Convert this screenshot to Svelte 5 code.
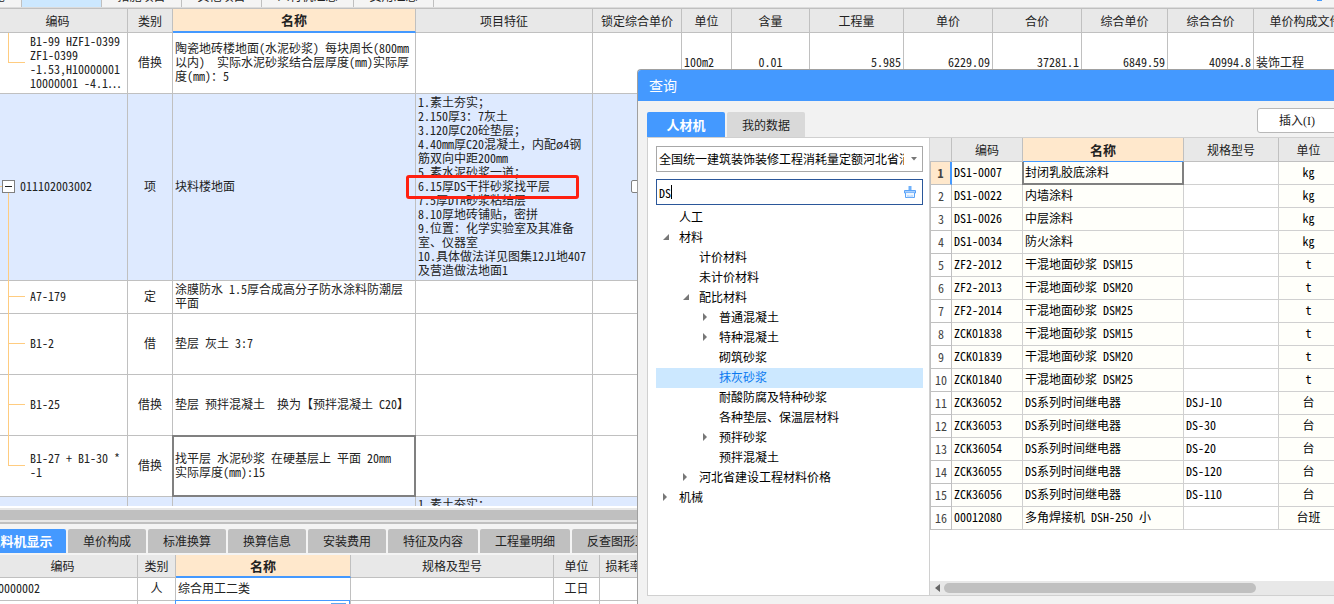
<script>
  const topTabs = [
    { label: '概览', width: 22 },
    { label: '', width: 80, active: true },
    { label: '措施项目', width: 80 },
    { label: '其他项目', width: 80 },
    { label: '人材机汇总', width: 92 },
    { label: '费用汇总', width: 80 },
  ];

  const billColumns = [
    ['编码', 140], ['类别', 45], ['名称', 243], ['项目特征', 177], ['锁定综合单价', 89], ['单位', 50],
    ['含量', 78], ['工程量', 94], ['单价', 89], ['合价', 89], ['综合单价', 86], ['综合合价', 86], ['单价构成文件', 104],
  ];

  const feature = [
    '1.素土夯实；', '2.150厚3：7灰土', '3.120厚C20砼垫层；', '4.40mm厚C20混凝土，内配ø4钢', '筋双向中距200mm',
    '5.素水泥砂浆一道；', '6.15厚DS干拌砂浆找平层', '7.5厚DTA砂浆粘结层', '8.10厚地砖铺贴，密拼', '9.位置：化学实验室及其准备',
    '室、仪器室', '10.具体做法详见图集12J1地407', '及营造做法地面1',
  ];

  const billRows = [
    {
      code: 'B1-99 HZF1-0399\nZF1-0399\n-1.53,H10000001\n10000001 -4.1⋯', kind: '借换', branch: 'last', height: 61,
      name: '陶瓷地砖楼地面(水泥砂浆) 每块周长(800mm\n以内)  实际水泥砂浆结合层厚度(mm)实际厚\n度(mm)：5',
      values: ['100m2', '0.01', '5.985', '6229.09', '37281.1', '6849.59', '40994.8', '装饰工程'],
    },
    { code: '011102003002', kind: '项', name: '块料楼地面', branch: 'root', height: 187, item: true, feature, lock: true },
    { code: 'A7-179', kind: '定', name: '涂膜防水 1.5厚合成高分子防水涂料防潮层\n平面', branch: 'mid', height: 33 },
    { code: 'B1-2', kind: '借', name: '垫层 灰土 3:7', branch: 'mid', height: 61 },
    { code: 'B1-25', kind: '借换', name: '垫层 预拌混凝土  换为【预拌混凝土 C20】', branch: 'mid', height: 61 },
    {
      code: 'B1-27 + B1-30 *\n-1', kind: '借换', branch: 'last', height: 61, current: true,
      name: '找平层 水泥砂浆 在硬基层上 平面 20mm\n实际厚度(mm):15',
    },
    { code: '', kind: '', name: '', branch: 'none', height: 33, item: true, feature: ['1.素土夯实；'], top: true },
  ];

  const valueAlign = ['left', 'center', 'right', 'right', 'right', 'right', 'right', 'left'];

  const detailTabs = ['工料机显示', '单价构成', '标准换算', '换算信息', '安装费用', '特征及内容', '工程量明细', '反查图形工程量'];
  const detailColumns = [['编码', 150], ['类别', 38], ['名称', 175], ['规格及型号', 203], ['单位', 46], ['损耗率', 48]];

  const tree = [
    { label: '人工', level: 0 },
    { label: '材料', level: 0, state: 'open' },
    { label: '计价材料', level: 1 },
    { label: '未计价材料', level: 1 },
    { label: '配比材料', level: 1, state: 'open' },
    { label: '普通混凝土', level: 2, state: 'closed' },
    { label: '特种混凝土', level: 2, state: 'closed' },
    { label: '砌筑砂浆', level: 2 },
    { label: '抹灰砂浆', level: 2 },
    { label: '耐酸防腐及特种砂浆', level: 2 },
    { label: '各种垫层、保温层材料', level: 2 },
    { label: '预拌砂浆', level: 2, state: 'closed' },
    { label: '预拌混凝土', level: 2 },
    { label: '河北省建设工程材料价格', level: 1, state: 'closed' },
    { label: '机械', level: 0, state: 'closed' },
  ];

  const resultColumns = [['', 22], ['编码', 71], ['名称', 161], ['规格型号', 95], ['单位', 60]];
  const results = [
    ['DS1-0007', '封闭乳胶底涂料', '', 'kg'],
    ['DS1-0022', '内墙涂料', '', 'kg'],
    ['DS1-0026', '中层涂料', '', 'kg'],
    ['DS1-0034', '防火涂料', '', 'kg'],
    ['ZF2-2012', '干混地面砂浆 DSM15', '', 't'],
    ['ZF2-2013', '干混地面砂浆 DSM20', '', 't'],
    ['ZF2-2014', '干混地面砂浆 DSM25', '', 't'],
    ['ZCK01838', '干混地面砂浆 DSM15', '', 't'],
    ['ZCK01839', '干混地面砂浆 DSM20', '', 't'],
    ['ZCK01840', '干混地面砂浆 DSM25', '', 't'],
    ['ZCK36052', 'DS系列时间继电器', 'DSJ-10', '台'],
    ['ZCK36053', 'DS系列时间继电器', 'DS-30', '台'],
    ['ZCK36054', 'DS系列时间继电器', 'DS-20', '台'],
    ['ZCK36055', 'DS系列时间继电器', 'DS-120', '台'],
    ['ZCK36056', 'DS系列时间继电器', 'DS-110', '台'],
    ['00012080', '多角焊接机 DSH-250 小', '', '台班'],
  ];

  let selected = $state('抹灰砂浆');
  let keyword = $state('DS');
  let detailTab = $state('工料机显示');
  let current = $state(0);
</script>

{#snippet head(columns)}
  <colgroup>
    {#each columns as [, width]}<col style="width: {width}px" />{/each}
  </colgroup>
  <thead>
    <tr>
      {#each columns as [label]}<th class:active={label === '名称'}>{label}</th>{/each}
    </tr>
  </thead>
{/snippet}

<div class="app">
  <nav class="top-tabs">
    {#each topTabs as tab}
      <button class:active={tab.active} style="width: {tab.width}px" aria-label={tab.label || '分部分项'}>{tab.label}</button>
    {/each}
    <span class="tool"></span>
  </nav>

  <section class="bill">
    <table class="bill-table">
      {@render head(billColumns)}
      <tbody>
        {#each billRows as row}
          <tr class:item={row.item} class:top={row.top} style="height: {row.height}px">
            <td class="code {row.branch}">
              {#if row.branch === 'root'}<button class="fold" aria-label="折叠"></button>{/if}{row.code}
            </td>
            <td class="center">{row.kind}</td>
            <td class:current={row.current}>{row.name}</td>
            <td class="feature">
              {#each row.feature ?? [] as line, i}
                <div class:marked={i === 6}>{line}</div>
              {/each}
            </td>
            <td class="center">
              {#if row.lock}<input type="checkbox" aria-label="锁定综合单价" />{/if}
            </td>
            {#each valueAlign as align, i}
              <td class={align}>{row.values?.[i] ?? ''}</td>
            {/each}
          </tr>
        {/each}
      </tbody>
    </table>
  </section>

  <section class="detail">
    <div class="track"></div>
    <div class="detail-tabs">
      {#each detailTabs as tab}
        <button class:active={detailTab === tab} onclick={() => (detailTab = tab)}>{tab}</button>
      {/each}
    </div>
    <table class="detail-table">
      {@render head(detailColumns)}
      <tbody>
        <tr>
          <td>10000002</td><td class="center">人</td><td>综合用工二类</td><td></td><td class="center">工日</td><td></td>
        </tr>
        <tr>
          <td></td><td></td><td class="editing"><button aria-label="选择"></button></td><td></td><td></td><td></td>
        </tr>
      </tbody>
    </table>
  </section>

  <div class="dialog" role="dialog" aria-label="查询">
    <header>查询</header>
    <div class="bar">
      <div class="dialog-tabs">
        <button class="active">人材机</button>
        <button>我的数据</button>
      </div>
      <button class="insert">插入(I)</button>
    </div>
    <div class="panels">
      <div class="side">
        <div class="field">
          <select aria-label="定额库">
            <option>全国统一建筑装饰装修工程消耗量定额河北省消耗量定额</option>
          </select>
          <svg class="chevron" viewBox="0 0 6 4" width="6" height="4"><path d="M0 0h6L3 3.500z" fill="#777" /></svg>
        </div>
        <div class="field search">
          <input type="text" aria-label="关键字" bind:value={keyword} />
          <span class="caret"></span>
          <button class="clear" aria-label="清空" onclick={() => (keyword = '')}>
            <svg viewBox="0 0 12 12" width="12" height="12">
              <path d="M4.500 0h3v4h-3z" fill="#6fb1fb" />
              <path d="M.5 4.500h11v2.500H.5z" fill="#a9d0fd" stroke="#5aa3f8" />
              <path d="M1.500 7v4.500h9V7" fill="#eef6ff" stroke="#5aa3f8" />
              <path d="M4 9v2.500M6 9.500v2M8 9v2.500" stroke="#9cc8fb" />
            </svg>
          </button>
        </div>
        <ul class="tree">
          {#each tree as node}
            <li>
              <button class="level{node.level}" class:selected={selected === node.label} onclick={() => (selected = node.label)}>
                <svg viewBox="0 0 8 8" width="8" height="8">
                  {#if node.state === 'open'}<path d="M7 1v6H1z" fill="#777" />{/if}
                  {#if node.state === 'closed'}<path d="M1 0v8l4-4z" fill="#777" />{/if}
                </svg>
                <span>{node.label}</span>
              </button>
            </li>
          {/each}
        </ul>
      </div>
      <div class="results">
        <table class="result-table">
          {@render head(resultColumns)}
          <tbody>
            {#each results as [code, name, spec, unit], i}
              <tr class:picked={i === current} onclick={() => (current = i)}>
                <td class="number">{i + 1}</td>
                <td class="tint">{code}</td>
                <td class="tint name">{name}</td>
                <td>{spec}</td>
                <td class="tint center">{unit}</td>
              </tr>
            {/each}
          </tbody>
        </table>
        <div class="scroll">
          <svg viewBox="0 0 5 8" width="5" height="8"><path d="M5 0v8L0 4z" fill="#666" /></svg>
          <div class="thumb"></div>
        </div>
      </div>
    </div>
  </div>
</div>

<style>
  :global(body) {
    margin: 0;
  }

  .app,
  .app button,
  .app input,
  .app select {
    font-family: "Noto Sans Mono CJK SC", "Noto Sans CJK SC", sans-serif;
    font-size: 12px;
    line-height: 14px;
    color: #222;
  }

  .app *,
  .app *::before,
  .app *::after {
    box-sizing: border-box;
  }

  .app {
    position: relative;
    display: flex;
    flex-direction: column;
    height: 100vh;
    overflow: hidden;
    background: #fff;
  }

  button {
    margin: 0;
    padding: 0;
    border: 0;
    background: none;
    white-space: nowrap;
  }

  .top-tabs {
    display: flex;
    flex: none;
    align-items: flex-end;
    height: 8px;
    overflow: hidden;
    background: #f4f4f4;
    border-bottom: 1px solid #dcdcdc;
  }

  .top-tabs button {
    flex: none;
    height: 22px;
    border-right: 1px solid #c0c0c0;
  }

  .top-tabs button:first-child {
    direction: rtl;
    padding-right: 16px;
  }

  .top-tabs .active {
    background: #cce8ff;
  }

  .tool {
    width: 5px;
    height: 1px;
    margin: 0 12px 6px auto;
    background: #4499ff;
  }

  table {
    table-layout: fixed;
    border-collapse: separate;
    border-spacing: 0;
    width: 0;
  }

  th {
    height: 24px;
    padding: 0;
    border: 0 solid #c0c0c0;
    border-width: 0 1px 1px 0;
    background: #e8e8e8;
    font-weight: 400;
    white-space: nowrap;
    overflow: hidden;
  }

  th.active {
    background: #ffe8cc;
    border-bottom: 2px solid #4499ff;
    font-size: 13px;
    font-weight: 700;
  }

  td {
    position: relative;
    padding: 0 2px 2px;
    border: 0 solid #c0c0c0;
    border-width: 0 1px 1px 0;
    white-space: pre;
  }

  .center {
    text-align: center;
  }

  .right {
    text-align: right;
  }

  .bill {
    flex: 1 1 0;
    min-height: 0;
    overflow: hidden;
    border-top: 1px solid #c0c0c0;
  }

  .bill-table,
  .detail-table {
    margin-left: -12px;
  }

  .item {
    background: #deeaff;
  }

  .top td {
    vertical-align: top;
  }

  .code {
    padding-left: 42px;
    white-space: pre-line;
  }

  .code.root {
    padding-left: 32px;
  }

  .code::before,
  .code::after {
    content: "";
    position: absolute;
    left: 20px;
    background: #ffcc80;
  }

  .code::before {
    top: 0;
    bottom: -1px;
    width: 1px;
  }

  .code::after {
    top: calc(50% - 1px);
    width: 17px;
    height: 1px;
  }

  .code.last::before {
    bottom: 50%;
  }

  .code.root::before {
    top: 50%;
  }

  .code.root::after {
    left: 12px;
    width: 8px;
  }

  .code.none::before,
  .code.none::after {
    display: none;
  }

  .fold {
    position: absolute;
    z-index: 1;
    left: 14px;
    top: calc(50% - 7px);
    width: 13px;
    height: 13px;
    border: 1px solid #808080;
    background: linear-gradient(#222, #222) center / 7px 1px no-repeat #fff;
  }

  .current::after {
    content: "";
    position: absolute;
    inset: -1px;
    border: 2px solid #808080;
  }

  .feature {
    white-space: normal;
  }

  .feature div {
    white-space: pre;
  }

  .marked {
    position: relative;
  }

  .marked::after {
    content: "";
    position: absolute;
    z-index: 1;
    inset: -4px 11px -6px -12px;
    border: 3px solid #ff2010;
    border-radius: 3px;
  }

  input[type="checkbox"] {
    appearance: none;
    display: block;
    width: 13px;
    height: 13px;
    margin: 0 auto;
    border: 1px solid #808080;
    border-radius: 2px;
    background: #fff;
  }

  .detail {
    flex: none;
    height: 98px;
    overflow: hidden;
    border-top: 2px solid #fff;
    background: #f4f4f4;
  }

  .track {
    height: 16px;
    border-top: 2px solid #e8e8e8;
    border-bottom: 2px solid #c0c0c0;
    background: linear-gradient(#c0c0c0, #c0c0c0) top / 100% 10px no-repeat #e8e8e8;
  }

  .detail-tabs {
    display: flex;
    gap: 2px;
    padding: 5px 0 2px;
    margin-left: -26px;
  }

  .detail-tabs button {
    flex: none;
    height: 24px;
    padding: 0 15px;
    background: #c0c0c0;
    border-radius: 2px 2px 0 0;
  }

  .detail-tabs .active {
    min-width: 92px;
    padding: 0 13px;
    background: #4499ff;
    color: #fff;
    font-size: 13px;
    font-weight: 700;
  }

  .detail-table th {
    height: 23px;
  }

  .detail-table td {
    height: 23px;
    background: #fff;
  }

  .detail-table td:first-child {
    padding-left: 4px;
  }

  .editing::after {
    content: "";
    position: absolute;
    inset: -1px 0 0 -1px;
    border: 1px solid #4499ff;
  }

  .editing button {
    position: absolute;
    right: 4px;
    top: 2px;
    width: 15px;
    height: 18px;
    background: #60a8f0;
  }

  .dialog {
    position: absolute;
    z-index: 2;
    inset: 69px -16px 0 637px;
    display: flex;
    flex-direction: column;
    padding-bottom: 8px;
    border: 1px solid #a0a0a0;
    border-width: 1px 0 0 1px;
    border-radius: 4px 0 0 0;
    background: #f2f2f2;
    overflow: hidden;
  }

  .dialog header {
    display: flex;
    align-items: center;
    flex: none;
    height: 31px;
    padding: 0 0 2px 11px;
    background: #4499ff;
    color: #fff;
    font-size: 14px;
  }

  .bar {
    display: flex;
    flex: none;
    justify-content: space-between;
    height: 36px;
    padding: 7px 13px 0 9px;
  }

  .dialog-tabs {
    display: flex;
    gap: 2px;
    align-items: flex-end;
  }

  .dialog-tabs button {
    width: 78px;
    height: 25px;
    background: #d9d9d9;
    border-radius: 2px 2px 0 0;
  }

  .dialog-tabs .active {
    background: #4499ff;
    color: #fff;
    font-size: 13px;
    font-weight: 700;
  }

  .insert {
    width: 80px;
    height: 25px;
    border: 1px solid #b8b8b8;
    border-radius: 3px;
    background: #fff;
  }

  .dialog .insert {
    font-family: "Liberation Serif", "Noto Sans CJK SC", serif;
  }

  .panels {
    display: flex;
    flex: 1;
    min-height: 0;
    margin-left: 9px;
    border: 1px solid #d0d0d0;
    background: #fff;
  }

  .side {
    flex: none;
    width: 282px;
    padding: 8px 6px 0 8px;
    border-right: 1px solid #d0d0d0;
  }

  .field {
    position: relative;
    height: 26px;
    margin-bottom: 7px;
  }

  .field select,
  .field input {
    appearance: none;
    width: 100%;
    height: 100%;
    margin: 0;
    padding: 0 18px 0 2px;
    border: 1px solid #a8a8a8;
    border-radius: 0;
    background: #fff;
    color: #000;
    outline: 0;
  }

  .field.search {
    margin-bottom: 3px;
  }

  .search input {
    border-color: #2b579a;
  }

  .chevron {
    position: absolute;
    right: 6px;
    top: 11px;
  }

  .caret {
    position: absolute;
    left: 15px;
    top: 6px;
    width: 1px;
    height: 14px;
    background: #000;
  }

  .clear {
    position: absolute;
    right: 7px;
    top: 7px;
    width: 12px;
    height: 12px;
    line-height: 0;
  }

  .clear svg {
    display: block;
  }

  .tree {
    margin: 0;
    padding: 0;
    list-style: none;
  }

  .tree button {
    display: flex;
    align-items: center;
    gap: 9px;
    width: 100%;
    height: 20px;
    padding: 0 0 2px 6px;
    color: #000;
  }

  .tree .level1 {
    padding-left: 26px;
  }

  .tree .level2 {
    padding-left: 46px;
  }

  .tree svg {
    flex: none;
  }

  .tree .selected {
    background: #cce8ff;
    color: #0a78f0;
  }

  .results {
    display: flex;
    flex: 1;
    flex-direction: column;
    justify-content: space-between;
    min-width: 0;
    overflow: hidden;
  }

  .result-table th.active {
    border-bottom-width: 1px;
  }

  .result-table td {
    height: 23px;
    border-color: #d0d0d0;
    color: #000;
  }

  .result-table .tint {
    background: #fffffa;
  }

  .result-table .number {
    border-color: #c0c0c0;
    border-left-width: 1px;
    padding: 0;
    text-align: center;
    color: #444;
  }

  .result-table .picked .number {
    background: #ffe8cc;
    font-weight: 700;
    border-right: 2px solid #4499ff;
  }

  .picked .name::after {
    content: "";
    position: absolute;
    inset: 0 -1px -1px -1px;
    border: 2px solid #808080;
    border-top: 0;
  }

  .scroll {
    display: flex;
    align-items: center;
    gap: 4px;
    flex: none;
    height: 14px;
    padding-left: 5px;
    background: #e8e8e8;
  }

  .thumb {
    width: 312px;
    height: 10px;
    border-radius: 5px;
    background: #c0c0c0;
  }
</style>
